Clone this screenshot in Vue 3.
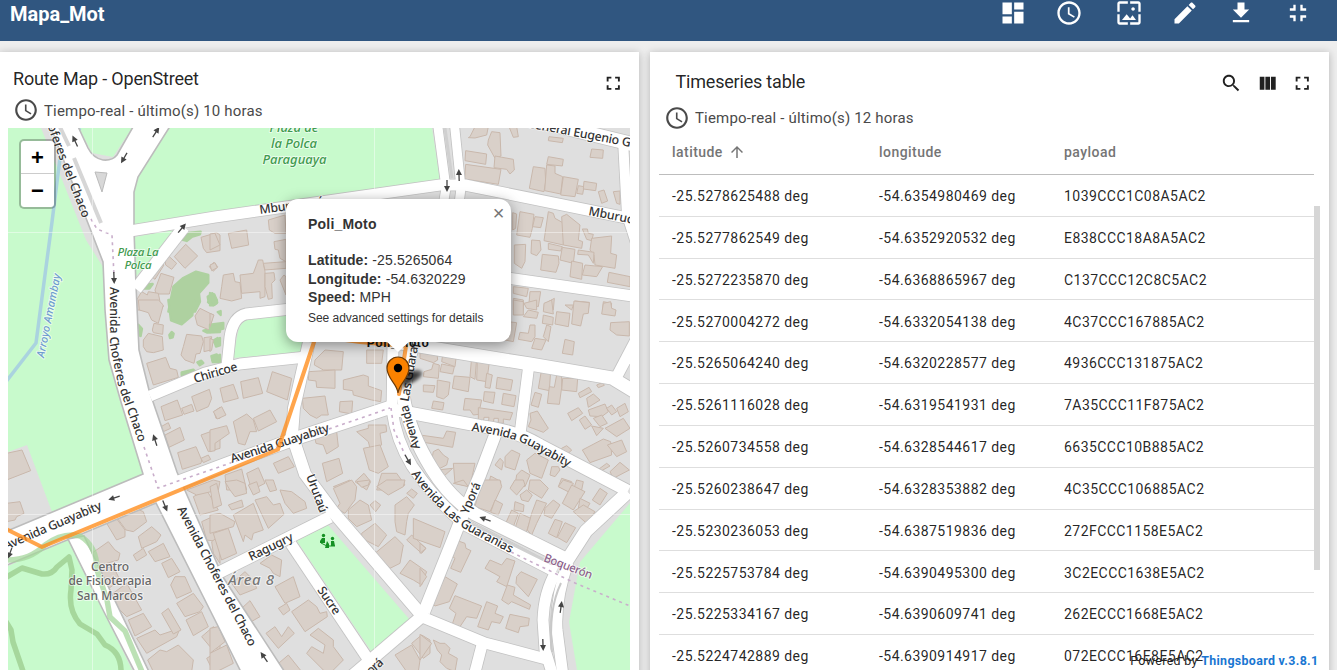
<script setup>
const toolbarIcons = [
  { name: 'dashboard', d: 'M3 13h8V3H3v10zm0 8h8v-6H3v6zm10 0h8V11h-8v10zm0-18v6h8V3h-8z' },
  { name: 'time', d: 'M11.99 2C6.47 2 2 6.48 2 12s4.47 10 9.99 10C17.52 22 22 17.52 22 12S17.52 2 11.99 2zM12 20c-4.42 0-8-3.58-8-8s3.58-8 8-8 8 3.58 8 8-3.58 8-8 8zm.5-13H11v6l5.25 3.15.75-1.23-4.5-2.67z' },
  { name: 'image', d: 'M4 4h7V2H4c-1.1 0-2 .9-2 2v7h2V4zm6 9l-4 5h12l-3-4-2.03 2.71L10 13zm7-4.5c0-.83-.67-1.5-1.5-1.5S14 7.67 14 8.5s.67 1.5 1.5 1.5S17 9.33 17 8.5zM20 2h-7v2h7v7h2V4c0-1.1-.9-2-2-2zm0 18h-7v2h7c1.1 0 2-.9 2-2v-7h-2v7zM4 13H2v7c0 1.1.9 2 2 2h7v-2H4v-7z' },
  { name: 'edit', d: 'M3 17.25V21h3.75L17.81 9.94l-3.75-3.75L3 17.25zM20.71 7.04c.39-.39.39-1.02 0-1.41l-2.34-2.34c-.39-.39-1.02-.39-1.41 0l-1.83 1.83 3.75 3.75 1.83-1.83z' },
  { name: 'download', d: 'M19 9h-4V3H9v6H5l7 7 7-7zM5 18v2h14v-2H5z' },
  { name: 'exit', d: 'M5 16h3v3h2v-5H5v2zm3-8H5v2h5V5H8v3zm6 11h2v-3h3v-2h-5v5zm2-11V5h-2v5h5V8h-3z' },
]
const clock = toolbarIcons[1].d
const fullscreen = 'M7 14H5v5h5v-2H7v-3zm-2-4h2V7h3V5H5v5zm12 7h-3v2h5v-5h-2v3zM14 5v2h3v3h2V5h-5z'
const search = 'M15.5 14h-.79l-.28-.27C15.41 12.59 16 11.11 16 9.5 16 5.91 13.09 3 9.5 3S3 5.91 3 9.5 5.91 16 9.5 16c1.61 0 3.09-.59 4.23-1.57l.27.28v.79l5 4.99L20.49 19l-4.99-5zm-6 0C7.01 14 5 11.99 5 9.5S7.01 5 9.5 5 14 7.01 14 9.5 11.99 14 9.5 14z'
const columns = 'M10 19h5V5h-5v14zm-6 0h5V5H4v14zM16 5v14h5V5h-5z'
const arrowUp = 'M4 12l1.41 1.41L11 7.83V20h2V7.83l5.58 5.59L20 12l-8-8-8 8z'

const rows = [
  ['-25.5278625488', '-54.6354980469', '1039CCC1C08A5AC2'],
  ['-25.5277862549', '-54.6352920532', 'E838CCC18A8A5AC2'],
  ['-25.5272235870', '-54.6368865967', 'C137CCC12C8C5AC2'],
  ['-25.5270004272', '-54.6332054138', '4C37CCC167885AC2'],
  ['-25.5265064240', '-54.6320228577', '4936CCC131875AC2'],
  ['-25.5261116028', '-54.6319541931', '7A35CCC11F875AC2'],
  ['-25.5260734558', '-54.6328544617', '6635CCC10B885AC2'],
  ['-25.5260238647', '-54.6328353882', '4C35CCC106885AC2'],
  ['-25.5230236053', '-54.6387519836', '272FCCC1158E5AC2'],
  ['-25.5225753784', '-54.6390495300', '3C2ECCC1638E5AC2'],
  ['-25.5225334167', '-54.6390609741', '262ECCC1668E5AC2'],
  ['-25.5224742889', '-54.6390914917', '072ECCC16E8E5AC2'],
]

// Buildings and trees are stored per map block, at three units per pixel.
const blocks = [
  { x: 0, y: 120, buildings: ['523,410 557,373 593,408 555,445', '603,352 650,338 660,345 660,392 620,398 610,385', '628,440 642,427 653,440 640,454', '495,420 508,410 530,430 515,448 497,435', '455,470 480,425 492,435 465,478', '465,510 483,460 522,472 508,522 468,522', '410,540 425,515 442,525 445,515 475,520 480,545 490,560 480,570 410,570'],
    trees: ['505,575 520,500 548,475 588,455 625,465 625,488 597,520 600,545 585,575', '543,358 563,339 602,335 600,343 575,351 560,363', '623,530 637,520 650,540 642,555 626,548', '430,506 443,493 458,492 448,506'] },
  { x: 0, y: 300, buildings: ['415,0 475,0 490,15 475,70 455,60 445,38 418,30', '585,48 600,25 640,45 628,90 592,75', '457,90 462,70 490,75 488,103 460,98', '430,120 445,100 487,110 490,150 460,158 440,155 430,140', '550,140 560,103 605,108 610,125 600,160 588,162 582,190 555,180 543,165', '612,113 635,110 633,150 612,155', '440,190 497,172 510,205 530,210 535,232 460,255', '483,320 532,300 548,345 495,362', '575,290 628,268 635,295 625,320 590,335', '545,325 575,313 582,333 552,343', '483,380 505,368 512,385 490,395', '495,405 540,382 553,420 507,442', '603,405 660,385 660,445 625,455', '642,335 660,322 660,355 648,355', '533,458 588,440 605,480 603,490 547,508', '603,475 625,465 632,478 610,488', '20,460 66,450 92,512 20,540'],
    trees: ['505,0 582,0 577,46 545,73 513,61', '508,105 515,96 521,101 518,112 510,114', '415,74 426,86 422,108 415,106', '545,217 580,209 586,215 560,226 545,226', '592,187 604,182 610,189 599,196', '610,92 660,79 660,96 622,98', '644,125 660,114 660,136 648,140', '637,180 660,164 660,186 644,185', '624,6 650,10 640,16'] },
  { x: 210, y: 120, buildings: ['0,342 15,340 30,375 0,390', '55,340 110,330 116,375 65,385', '0,435 15,428 22,443 5,452', '175,300 225,285 228,340 195,340 178,330', '192,365 228,358 228,425 210,415 205,390 195,388', '40,465 70,460 75,485 90,488 95,535 65,543 30,535 35,500', '90,465 130,460 145,420 158,420 165,455 165,530 150,535 150,515 95,520', '160,430 228,425 228,445 165,450', '165,460 192,458 195,480 185,490 187,535 175,538 165,500', '210,480 222,465 228,470 228,525'],
    trees: ['0,519 13,523 21,543 8,556 0,556'] },
  { x: 420, y: 120, buildings: ['150,50 165,20 205,20 200,45 165,54 145,53', '205,60 215,35 240,38 243,108 225,115 203,75', '137,92 200,102 197,133 135,122', '225,108 280,118 283,150 270,162 260,148 222,143', '137,133 243,148 235,193 134,177', '267,20 290,20 295,50 280,52', '387,50 430,55 427,68 385,62', '515,87 550,90 548,115 510,112', '385,110 430,118 427,138 380,133', '340,140 375,145 377,185 372,215 328,205', '380,135 405,138 405,160 428,170 422,222 374,212', '430,170 475,178 465,230 422,225', '475,197 492,200 488,223 470,220', '492,184 530,190 527,212 490,207', '535,215 552,210 563,243 545,250', '580,215 600,213 600,253 590,250', '278,278 290,282 287,325 278,330', '300,275 342,283 337,325 330,352 290,345', '345,290 370,293 362,323 338,320', '385,275 400,280 405,295 432,310 430,375 372,362', '425,290 440,283 480,315 475,360 488,365 485,385 430,375', '487,327 502,327 505,340 520,343 515,362 500,358', '515,355 575,348 572,400 590,405 585,445 525,435 522,405 510,390', '335,360 360,362 363,390 350,407 333,400', '385,370 427,380 422,393 385,388', '283,375 317,373 315,425 305,445 283,430', '367,403 415,408 417,430 408,457 362,450', '427,382 465,388 460,430 420,420', '475,390 522,397 520,430 505,405 473,403', '455,423 488,430 485,478 450,470', '495,435 548,440 530,470 487,465', '567,457 630,470 630,500 562,487', '280,500 325,505 320,530 280,520', '330,515 362,515 355,560 327,550', '280,535 310,540 310,570 280,570', '373,565 385,545 403,535 400,570', '435,555 460,555 455,570', '465,543 508,547 505,570 465,570', '550,545 575,550 572,570 548,570'], trees: [] },
  { x: 210, y: 300, buildings: ['30,265 70,253 85,295 40,307', '92,245 145,233 158,280 100,295', '187,215 245,235 232,300 170,275', '10,335 35,320 48,345 22,357', '0,390 50,377 58,400 15,430 15,452 0,455', '70,365 110,342 130,360 140,395 120,395 105,435 85,430', '130,355 180,330 200,365 145,393', '190,490 235,470 253,500 205,520', '45,525 95,507 110,570 50,570', '110,520 145,503 165,550 125,570', '315,180 345,150 400,155 395,210 340,210 313,195', '297,215 375,210 375,265 320,262 318,243 295,240', '400,240 460,225 475,230 475,258 515,272 512,305 485,300 430,285 428,272 400,268', '390,305 428,303 425,342 388,335', '277,295 345,288 350,318 355,345 335,345 320,355 300,345 280,325', '315,415 380,395 385,440 350,462 340,435 318,430', '440,395 475,385 475,375 528,375 530,395 510,400 515,435 480,445 475,425', '460,445 510,435 535,500 505,520 478,510', '337,490 387,475 398,520 350,545', '370,560 420,540 435,555 420,570', '435,545 462,520 482,545 470,570', '515,520 560,520 585,555 560,570 500,570', '470,150 520,150 515,190 470,190', '0,40 12,45 0,80', '0,115 10,120 5,150 0,155'],
    trees: ['0,74 40,69 40,86 0,96', '8,4 22,7 15,13', '9,122 23,114 29,129 19,136', '4,168 20,163 28,171 22,186 8,186', '23,36 32,33 32,45'] },
  { x: 420, y: 300, buildings: ['280,0 310,5 310,45 280,45', '312,10 350,0 350,30 320,25', '325,30 355,37 350,55 310,50', '372,10 395,0 400,42 370,35', '370,45 400,52 398,75 367,70', '410,35 450,40 445,80 405,72', '462,3 508,8 505,40 490,42 482,78 455,72', '550,10 572,5 575,25 588,30 585,48 545,42', '572,68 628,65 628,108 590,105 570,90', '380,75 393,80 385,125 370,110', '300,97 325,100 330,75 345,75 345,110 335,125 295,118', '345,115 378,120 365,150 335,145', '435,118 463,125 458,165 427,160', '262,65 290,68 280,125 255,120', '0,143 50,150 53,180 40,188 0,175', '70,150 110,160 105,200 65,185', '12,215 35,208 40,190 58,195 55,235 10,230', '65,192 103,200 98,222 60,215', '10,255 45,257 40,277 10,275', '52,240 90,247 85,285 70,297 50,290', '103,228 150,232 145,275 97,265', '155,170 170,175 165,238 150,230', '172,180 208,187 200,245 170,240', '200,220 217,225 210,265 195,262', '232,232 278,240 272,272 228,265', '193,275 225,277 220,310 190,303', '250,280 288,287 282,320 245,313', '40,303 72,308 68,330 35,325', '135,295 185,300 180,323 178,343 160,345 150,330 130,330', '175,323 278,338 270,360 250,357 250,370 235,370 235,355 222,355 220,370 205,368 207,352 192,352 190,367 175,365', '365,208 392,212 388,272 355,265', '410,225 425,228 425,262 418,313 382,310 388,260 403,262', '428,235 473,235 470,275 425,270', '345,277 365,283 355,322 333,315', '330,340 352,333 385,385 370,397 325,380 333,360', '475,280 507,262 515,275 480,293', '530,255 548,247 553,256 535,263', '500,295 520,282 540,300 505,322', '505,330 555,312 565,335 545,350 510,348', '443,340 475,323 488,340 455,362', '478,360 495,348 515,375 495,388', '520,355 545,345 562,370 540,380', '560,325 575,315 590,335 575,345', '590,325 615,310 625,335 600,350', '515,378 550,385 530,407', '555,385 610,355 630,385 590,410', '487,450 550,417 572,425 575,465 510,488', '562,435 605,420 620,455 590,470', '533,510 560,490 570,498 540,515', '570,515 600,487 628,510 580,535', '425,445 440,437 455,450 440,465 420,455', '0,405 70,415 80,393 107,397 98,442 0,425', '40,455 55,447 70,465 85,475 80,495 60,505 32,495', '100,490 165,490 150,560 105,550', '50,510 98,505 70,530', '255,470 275,450 300,462 285,510 255,500', '225,495 240,475 250,485 245,510', '320,480 345,460 385,480 365,535 330,520', '290,525 305,510 330,525 315,560 285,555', '395,500 415,500 420,510 405,530 390,525', '212,528 243,545 230,575 200,575', '425,535 455,545 440,570 415,560', '470,540 490,545 485,570 460,570'], trees: [] },
  { x: 0, y: 480, buildings: ['20,70 60,65 72,100 50,110 45,120 20,125', '320,130 345,110 375,150 375,170 350,180', '345,105 395,80 430,95 440,125 400,155 378,150', '415,170 455,140 483,165 470,185 425,205', '400,225 430,205 440,225 410,243', '445,215 490,190 510,230 465,245', '485,250 515,235 540,275 505,293', '512,315 525,290 555,290 575,335 530,355', '275,220 325,185 345,210 360,220 355,240 320,250 300,270', '280,270 340,260 360,300 320,330 300,310', '325,350 380,310 425,390 380,410 350,380', '385,420 430,400 455,440 405,468', '410,475 465,450 480,465 540,445 530,470 440,520', '485,400 505,385 543,450 520,462', '530,370 580,340 610,380 600,395 555,410', '558,420 605,395 625,440 580,467', '605,470 640,440 660,455 660,510 630,500', '443,540 480,510 500,515 535,495 580,540 575,575 460,575', '620,535 660,510 660,575 640,575', '580,50 620,30 655,90 600,105', '605,125 660,100 660,185 620,180', '560,30 640,0 660,5 655,30 590,45', '635,185 660,165 660,250 640,220'], trees: [] },
  { x: 210, y: 480, buildings: ['0,20 20,10 35,75 10,85', '45,5 80,0 105,10 110,40 75,50 60,30', '115,15 140,5 150,35 130,45', '165,0 190,0 200,30 180,35', '210,30 245,35 285,65 290,85 250,100 225,70', '55,75 95,60 100,80 65,90', '0,105 30,100 75,125 70,140 0,160', '70,105 130,70 160,150 130,160 125,180 105,165 100,185', '135,60 170,50 190,75 210,70 222,103 175,145', '10,160 55,145 80,220 35,240', '150,250 185,225 215,240 210,290 190,280 180,265', '195,320 250,290 270,350 225,370', '205,385 230,370 240,390 220,405', '245,395 295,360 320,380 330,400 350,395 352,410 285,455', '168,460 195,440 215,470 235,440 253,460 205,505', '95,385 120,362 150,410 115,430', '65,310 105,275 130,300 140,325 90,345', '0,445 25,440 45,485 0,520', '0,520 50,495 70,550 20,575 0,575', '300,465 325,445 370,480 370,500 400,540 365,575 345,575 290,520 305,500 340,520 345,495', '200,555 235,525 275,575 205,575', '370,25 425,0 440,20 435,60 405,100 380,85 390,70', '415,90 450,60 475,75 485,120 440,140 415,115', '480,75 495,62 512,75 497,95', '455,160 495,130 530,165 505,200 455,175', '495,220 555,170 580,195 570,250 540,265', '570,280 600,240 650,275 635,315 610,300', '590,180 605,165 648,205 635,220', '555,75 590,50 613,75 595,100 590,125 585,165 560,155 555,125', '590,40 605,27 622,40 610,55', '500,20 530,0 585,0 580,20 535,45', '440,5 480,0 475,15 455,22', '555,525 605,495 630,540 625,575 590,575', '605,490 635,465 660,480 660,520 640,535'], trees: [] },
  { x: 420, y: 480, buildings: ['185,0 240,0 245,20 210,95 165,80', '225,60 248,72 235,105 212,97', '275,90 295,100 280,140 257,130', '300,100 332,115 318,160 285,145', '335,100 350,60 380,70 350,130 335,165 322,150', '270,25 285,0 310,0 315,15 290,45', '300,45 320,30 337,45 325,65 305,60', '330,0 360,0 385,25 365,55 325,30', '285,65 312,75 310,95 282,90', '375,85 400,60 420,75 395,115 372,105', '415,20 430,0 460,10 450,38', '455,15 495,35 460,90 427,70', '480,55 510,70 495,95 475,85', '460,95 490,75 525,95 500,130', '540,25 562,40 540,75 517,60', '405,118 427,125 410,173 385,160', '435,128 467,143 440,188 412,172', '-20,115 75,155 60,203 -20,175', '0,190 18,205 0,220', '0,265 20,290 0,320', '115,183 135,190 138,205 153,212 122,277 92,265 105,235 98,230', '75,290 112,312 88,365 45,378 38,370', '105,347 185,378 170,415 140,410 120,440 97,432 108,400 88,385', '200,365 233,378 225,400 250,410 240,430 215,425 205,450 173,440', '270,403 328,415 325,437 300,440 295,458 257,445', '210,240 245,255 260,235 285,243 260,320 230,305 240,290 195,265', '303,275 352,298 325,350 288,310 290,290', '262,315 285,322 280,345 332,375 328,388 275,365 265,373 245,360', '0,463 35,490 0,540', '40,480 60,490 75,490 90,505 85,520 112,535 105,575 80,565 60,545 65,525 52,510', '100,10 130,0 145,20'], trees: [] },
]

const roads = [
  { d: 'M130 231 L215 217 L440 185 L465 185 L622 217 L645 222', w: 11 },
  { d: 'M136 289 L184 227', w: 12 },
  { d: 'M150 396 L205 373 L240 364 L306 357', w: 11 },
  { d: 'M227 366 L230 337 Q233 317 246 314 L300 308', w: 11 },
  { d: 'M309 342 L294 408 L292 435 L305 474 L334 513 L424 618', w: 12 },
  { d: 'M165 487 L245 457 L300 437 L394 406', w: 13 },
  { d: 'M395 410 L480 426 Q515 430 540 445 L628 491', w: 12 },
  { d: 'M395 342 L480 356 L530 364 L612 378 L645 398', w: 13 },
  { d: 'M616 378 L638 336', w: 11 },
  { d: 'M529 364 L520 434', w: 11 },
  { d: 'M500 277 L640 297', w: 11 },
  { d: 'M623 140 L627 215 L642 262', w: 10 },
  { d: 'M530 119 L640 146', w: 14 },
  { d: 'M437 120 L446 188 L434 260', w: 9 },
  { d: 'M454 120 L461 188 L452 260', w: 9 },
  { d: 'M628 492 L586 531 L566 562', w: 13 },
  { d: 'M497 430 L480 475 L460 522 L424 612', w: 12 },
  { d: 'M393 345 L392 410 Q396 440 412 466 Q435 500 465 525 L556 572', w: 11 },
  { d: 'M412 345 L403 395 Q409 432 432 469 Q450 498 475 514 L566 559', w: 13 },
  { d: 'M556 572 Q544 592 543 620 L545 650 L553 676', w: 11 },
  { d: 'M568 562 Q555 600 557 630 L563 676', w: 11 },
  { d: 'M214 575 L330 517', w: 12 },
  { d: 'M291 544 L370 662', w: 11 },
  { d: 'M352 676 L420 618', w: 12 },
  { d: 'M415 614 L485 643 L546 659', w: 11 },
  { d: 'M482 645 L474 676', w: 11 },
]

const arrows = [
  [75, 141, -115], [124, 158, 120], [156, 132, -57], [182, 228, -50], [114, 278, 88],
  [155, 440, -108], [114, 498, 162], [165, 506, 68], [447, 186, 90], [459, 175, -92],
  [408, 460, 60], [485, 519, 200], [561, 607, -82], [543, 645, 88], [264, 657, -125], [10, 553, 110],
]

const streets = [
  { id: 's1', d: 'M42 111 L60 160 L84 222', t: 'Choferes del Chaco', l: 115 },
  { id: 's2', d: 'M110 287 L110 345 L118 385 L140 446', t: 'Avenida Choferes del Chaco', l: 160 },
  { id: 's3', d: 'M177 509 L250 648', t: 'Avenida Choferes del Chaco', l: 156 },
  { id: 's4', d: 'M6 550 L104 508', t: 'Avenida Guayabity', l: 105 },
  { id: 's5', d: 'M232 463 L331 431', t: 'Avenida Guayabity', l: 103 },
  { id: 's6', d: 'M471 431 Q513 436 535 449 L571 469', t: 'Avenida Guayabity', l: 105 },
  { id: 's7', d: 'M420 448 L408 405 L420 335', t: 'Avenida Las Guaranias', l: 126 },
  { id: 's8', d: 'M411 474 Q438 512 468 531 L514 555', t: 'Avenida Las Guaranias', l: 129 },
  { id: 's9', d: 'M195 383 L239 370', t: 'Chiricoe', l: 45 },
  { id: 's10', d: 'M306 476 L321 516', t: 'Urutaú', l: 40 },
  { id: 's11', d: 'M251 561 L296 539', t: 'Ragugry', l: 48 },
  { id: 's12', d: 'M317 590 L336 618', t: 'Sucre', l: 31 },
  { id: 's13', d: 'M468 515 L482 482', t: 'Yporá', l: 33 },
  { id: 's14', d: 'M260 214 L326 205', t: 'Mburucuyá', l: 65 },
  { id: 's15', d: 'M588 215 L655 228', t: 'Mburucuyá', l: 66 },
  { id: 's16', d: 'M526 127 L636 148', t: 'General Eugenio G.', l: 109 },
  { id: 's17', d: 'M361 684 L385 663', t: 'Yporá', l: 31 },
]
</script>

<template>
  <div class="page">
    <header class="toolbar">
      <h1>Mapa_Mot</h1>
      <nav>
        <button v-for="icon in toolbarIcons" :key="icon.name" :class="icon.name">
          <svg viewBox="0 0 24 24"><path :d="icon.d" /></svg>
        </button>
      </nav>
    </header>

    <main class="widgets">
      <section class="card map-card">
        <div class="map-head">
          <h2>Route Map - OpenStreet</h2>
          <svg class="tool" viewBox="0 0 24 24"><path :d="fullscreen" /></svg>
        </div>
        <div class="timewindow">
          <svg viewBox="0 0 24 24"><path :d="clock" /></svg>
          <span>Tiempo-real - último(s) 10 horas</span>
        </div>

        <div class="map">
          <svg class="tiles" viewBox="8 128 622 542" width="622" height="542">
            <defs>
              <path v-for="s in streets" :id="s.id" :key="s.id" :d="s.d" />
              <path id="stream-label" d="M44 358 L62 268" />
              <path id="boqueron" d="M543 561 L596 581" />
            </defs>
            <rect x="8" y="128" width="622" height="542" fill="#dfdfdf" />

            <g fill="#c8facc">
              <path d="M8 128 H41 L63 182 L86 240 L103 267 L105 310 L109 362 L121 405 L143 474 L52 512 L27 445 L8 452 Z" />
              <path d="M79 128 H132 L113 157 L92 153 Z" />
              <path d="M169 128 H432 L440 180 L215 212 L134 226 V192 L139 175 Z" />
              <path d="M134 237 L174 230 L135 278 Z" />
              <path d="M233 358 L238 332 Q241 319 253 318 L306 312 L301 352 Z" />
              <path d="M8 566 L69 539 L132 670 H8 Z" />
              <path d="M297 541 L328 525 L410 620 L373 654 Z" />
              <path d="M630 503 L580 562 L569 622 L577 670 H630 Z" />
            </g>

            <g fill="none" stroke="#aad3df" stroke-width="3.5" stroke-linejoin="round">
              <path d="M5 383 L36 343 L43 290 L52 222 L60 158 L80 128" />
            </g>

            <g v-for="(b, i) in blocks" :key="i" :transform="`translate(${b.x} ${b.y}) scale(.33333)`">
              <polygon v-for="p in b.trees" :key="p" class="tree" :points="p" />
              <polygon v-for="p in b.buildings" :key="p" class="building" :points="p" />
            </g>

            <g fill="none" stroke="#c2c2c2" stroke-linejoin="round">
              <path v-for="r in roads" :key="r.d" :d="r.d" :stroke-width="r.w + 1.6" />
            </g>
            <g fill="#fff" stroke="#bcbcbc" stroke-width="1.6">
              <path d="M48 120 L103 262 L105 310 L109 360 L121 402 L143 474 L0 534 V568 L156 503 L220 630 L245 680 H290 L223 577 L183 486 L177 472 L149 390 L139 350 L136 285 L134 230 V192 L138 177 L174 120 H137 L117 155 Q112 161 103 160 Q93 158 88 148 L75 120 Z" />
              <path d="M68 539 L84 536 L153 680 H139 L104 612 Z" />
            </g>
            <g fill="none" stroke="#fff" stroke-linejoin="round">
              <path v-for="r in roads" :key="r.d" :d="r.d" :stroke-width="r.w" />
            </g>
            <path d="M58 123 L69 146 M74 158 L101 223" fill="none" stroke="#d6d6d6" stroke-width="4" />
            <path d="M95 172 L107 173 L102 192 Z" fill="#d8d8d8" stroke="#bbb" />
            <path d="M445 128 L452 178 M468 522 L552 564" stroke="#d0d0d0" stroke-width="3" />
            <path d="M561 583 Q548 610 552 652" fill="none" stroke="#c8c8c8" stroke-width="2" />

            <g fill="none" stroke="#a6d79c" stroke-width="5.5" stroke-linecap="round" stroke-linejoin="round">
              <path d="M5 578 L22 568 L42 574 Q52 575 57 567 L69 557 L72 570 L71 590 Q68 610 80 624 L97 634 L105 645 Q122 652 121 674" />
              <path d="M5 620 L11 630 L13 642 L24 674" />
              <path d="M8 560 Q30 560 45 545 Q63 532 80 536 Q97 546 97 570 L107 600 L110 617 L125 631 L143 674" opacity=".75" />
            </g>

            <g class="dots" fill="none">
              <path d="M91 219 L97 229 L112 235 L114 276" />
              <path d="M144 447 L158 488 L390 408" />
              <path d="M391 408 L394 430 L405 455" />
              <path d="M511 552 L575 583 L630 606" />
            </g>

            <g stroke="#fff" opacity=".45">
              <path d="M92.5 128 V670 M374.5 128 V670 M8 232.5 H630 M8 514.5 H630" />
            </g>

            <g v-for="a in arrows" :key="a.join()" :transform="`translate(${a[0]} ${a[1]}) rotate(${a[2]})`">
              <path d="M-6 0 H2" stroke="#444" stroke-width="1.3" />
              <path d="M6 0 L0 -3 V3 Z" fill="#444" />
            </g>

            <g class="street">
              <text v-for="s in streets" :key="s.id" :textLength="s.l"><textPath :href="'#' + s.id" :textLength="s.l">{{ s.t }}</textPath></text>
            </g>
            <text class="stream"><textPath href="#stream-label" textLength="85">Arroyo Amambay</textPath></text>
            <text class="boqueron"><textPath href="#boqueron" textLength="51">Boquerón</textPath></text>
            <g class="park big">
              <text x="294" y="132" textLength="49">Plaza de</text>
              <text x="294" y="147.5" textLength="46">la Polca</text>
              <text x="294.5" y="163.5" textLength="64">Paraguaya</text>
            </g>
            <g class="park">
              <text x="138" y="255.5" textLength="41">Plaza La</text>
              <text x="138" y="268.5" textLength="27">Polca</text>
            </g>
            <g class="place">
              <text x="110" y="570.5" textLength="38">Centro</text>
              <text x="110" y="585" textLength="83">de Fisioterapia</text>
              <text x="110" y="599.5" textLength="66">San Marcos</text>
            </g>
            <text class="area" x="228" y="585" textLength="46">Área 8</text>

            <g fill="#149123">
              <circle cx="323.5" cy="535.5" r="1.7" /><circle cx="332.5" cy="538.5" r="1.7" />
              <path d="M322 538 h3 v5 h-5 v-2 Z M331 541 h3 l1 5 h-4 Z M327 541 l2 3 v4 h-4 Z" />
              <path d="M321 543 l6 3 h8" stroke="#149123" fill="none" />
            </g>

            <path class="route" d="M4 528 L42 547 L278 449.5 L316 336 L360 342 L406 346 L399 394" />

            <ellipse cx="411" cy="377" rx="12" ry="6" transform="rotate(-24 411 377)" fill="#000" class="pin-shadow" />
            <path d="M399 392 L420 374 L407 371 Z" fill="#000" class="pin-shadow" />
          </svg>

          <div class="marker-label">Poli_Moto</div>
          <svg class="pin" viewBox="0 0 24 38" width="24" height="38">
            <path d="M12 37 C11 27 1 23 1 12 A11 11 0 0 1 23 12 C23 23 13 27 12 37 Z" fill="#fb8200" stroke="#6b3a06" stroke-width="1.2" />
            <circle cx="12" cy="12" r="4.2" fill="#000" />
          </svg>

          <div class="zoom"><span>+</span><span>−</span></div>

          <div class="popup">
            <span class="close">×</span>
            <b class="name">Poli_Moto</b>
            <div><b>Latitude:</b> -25.5265064</div>
            <div><b>Longitude:</b> -54.6320229</div>
            <div><b>Speed:</b> MPH</div>
            <small>See advanced settings for details</small>
          </div>
        </div>
      </section>

      <section class="card table-card">
        <div class="table-head">
          <h2>Timeseries table</h2>
          <svg class="tool" viewBox="0 0 24 24"><path :d="search" /></svg>
          <svg class="tool" viewBox="0 0 24 24"><path :d="columns" /></svg>
          <svg class="tool" viewBox="0 0 24 24"><path :d="fullscreen" /></svg>
        </div>
        <div class="timewindow">
          <svg viewBox="0 0 24 24"><path :d="clock" /></svg>
          <span>Tiempo-real - último(s) 12 horas</span>
        </div>
        <div class="grid">
          <div class="tr th">
            <span>latitude <svg viewBox="0 0 24 24"><path :d="arrowUp" /></svg></span>
            <span>longitude</span>
            <span>payload</span>
          </div>
          <div v-for="r in rows" :key="r[2]" class="tr">
            <span>{{ r[0] }} deg</span><span>{{ r[1] }} deg</span><span>{{ r[2] }}</span>
          </div>
        </div>
        <div class="scrollbar"></div>
      </section>
    </main>
    <footer>Powered by <b>Thingsboard v.3.8.1</b></footer>
  </div>
</template>

<style>
html, body { margin: 0; overflow: hidden; }
</style>

<style scoped>
* { box-sizing: border-box; }
.page { position: relative; width: 1337px; height: 670px; overflow: hidden; background: #eee; font-family: Roboto, sans-serif; color: #212121; }
h1, h2 { margin: 0; }
svg { display: block; fill: currentColor; flex: none; }
.toolbar { height: 41px; background: #305680; color: #fff; display: flex; justify-content: space-between; padding: 0 25.5px 0 10px; }
.toolbar h1 { font-size: 20px; line-height: 28px; font-weight: 700; }
nav { display: flex; gap: 28.2px; }
nav button { border: 0; padding: 0; background: none; color: #fff; width: 28px; height: 27px; }
nav .time { margin-right: 4px; }
nav button svg { width: 28px; height: 28px; margin-top: -1px; }
.widgets { display: flex; gap: 11px; height: 629px; padding-top: 11px; }
.card { background: #fff; height: 640px; box-shadow: 0 1px 8px rgba(0, 0, 0, .25); }
h2 { font-size: 18px; font-weight: 400; letter-spacing: -.2px; color: rgba(0, 0, 0, .87); }
.tool { width: 22.5px; height: 22.5px; color: #212121; }
.timewindow { display: flex; align-items: center; color: #4a4a4a; font-size: 15px; letter-spacing: .17px; }
.timewindow svg { width: 26px; height: 26px; }
.map-card { width: 639px; padding-left: 8px; }
.map-head { height: 45px; display: flex; justify-content: space-between; padding: 16px 15px 0 5px; }
.map-head h2 { line-height: 22px; }
.map-head .tool { margin-top: 4px; }
.map-card .timewindow { height: 31px; padding: 0 0 4.5px 5px; gap: 5px; }
.map-card .timewindow span { padding-top: 1px; }
.map { position: relative; width: 622px; height: 542px; overflow: hidden; }
.building { fill: #d9d0c9; stroke: #c9b8ac; stroke-width: 3; }
.tree { fill: #aed1a0; stroke: #aed1a0; stroke-width: 7; stroke-linejoin: round; }
.dots path { stroke: #c9aecb; stroke-width: 1.6; stroke-dasharray: 3 4; }
.tiles text { font-family: "Noto Sans", "Open Sans", sans-serif; font-weight: 500; paint-order: stroke; stroke: rgba(255, 255, 255, .6); stroke-width: 2px; stroke-linejoin: round; }
.street text { font-size: 12.3px; fill: #333; }
.tiles .stream { font-size: 11px; font-style: italic; fill: #6f9cd0; }
.tiles .boqueron { font-size: 11.5px; fill: #8d618b; }
.park text { font-size: 11.5px; font-style: italic; fill: #3f9a4e; text-anchor: middle; }
.park.big text { font-size: 13px; }
.place text { font-size: 12px; fill: #666; text-anchor: middle; }
.tiles .area { font-size: 15px; font-style: italic; fill: #777; }
.route { fill: none; stroke: #ff8c1a; stroke-opacity: .78; stroke-width: 4; stroke-linejoin: round; stroke-linecap: round; }
.pin-shadow { opacity: .5; filter: blur(1.5px); }
.marker-label { position: absolute; left: 340px; width: 100px; top: 207px; text-align: center; font: bold 12px/16px "Liberation Sans", Arial, sans-serif; letter-spacing: .6px; color: #111; }
.pin { position: absolute; left: 378px; top: 228px; }
.zoom { position: absolute; left: 11px; top: 11px; width: 37px; height: 70px; border: 2px solid rgba(0, 0, 0, .25); border-radius: 5px; background: #fff; background-clip: padding-box; color: #000; font: bold 22px/33px "Liberation Sans", Arial, sans-serif; text-align: center; }
.zoom span { display: block; height: 33px; }
.zoom span:first-child { border-bottom: 1px solid #ccc; }
.popup { position: absolute; left: 278px; top: 70.5px; width: 225px; height: 143px; padding: 16px 22px; border-radius: 12px; background: #fff; box-shadow: 0 3px 14px rgba(0, 0, 0, .4); color: #333; font: 14px/18.4px "Liberation Sans", Arial, sans-serif; letter-spacing: .13px; }
.popup::after { content: ""; position: absolute; left: 100px; top: 142px; border: 12px solid transparent; border-top: 11px solid #fff; border-bottom: 0; }
.popup .name { display: block; margin-bottom: 18.5px; letter-spacing: .2px; }
.popup small { display: block; padding-top: 1px; font-size: 12px; line-height: 20px; letter-spacing: -.04px; white-space: nowrap; }
.close { position: absolute; right: 6.5px; top: 5.5px; font-size: 20px; line-height: 18px; color: #757575; }
.table-card { position: relative; width: 679px; padding-left: 9px; }
.table-head { height: 50px; display: flex; padding: 19px 15.5px 0 16.5px; gap: 13px; }
.table-head h2 { flex: 1; line-height: 22px; }
.table-head .tool { margin-top: 1px; }
.table-card .timewindow { height: 32px; padding-left: 5px; gap: 5px; }
.grid { width: 655px; }
.tr { display: grid; grid-template-columns: 207px 185px 1fr; align-items: center; height: 41.83px; padding: 1.5px 0 0 13px; border-bottom: 1px solid #dedede; font-size: 14px; letter-spacing: .45px; color: rgba(0, 0, 0, .87); }
.th { border-color: #bdbdbd; font-weight: 500; color: #757575; height: 41px; padding-top: 0; padding-bottom: 5px; }
.th span { display: flex; align-items: center; gap: 5px; }
.th svg { width: 18px; height: 18px; }
.scrollbar { position: absolute; left: 664px; top: 154px; width: 6px; height: 364px; background: #d6d6d6; }
footer { position: absolute; right: 18.5px; bottom: 1px; font-size: 12.4px; line-height: 16px; letter-spacing: .34px; }
footer b { color: #1976d2; font-weight: 700; }
</style>
